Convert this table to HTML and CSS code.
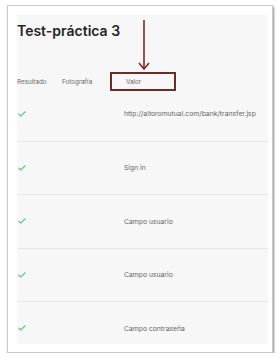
FILE: index.html
```html
<!DOCTYPE html>
<html lang="es">
<head>
<meta charset="utf-8">
<link rel="stylesheet" href="styles.css">
</head>
<body>
<div class="card">
  <svg class="arrow" width="16" height="54" viewBox="0 0 16 54">
    <line x1="8" y1="0" x2="8" y2="49" />
    <polyline points="3,43 8,49 13,43" />
  </svg>
  <div class="panel">
    <h1 class="title">Test-práctica 3</h1>
    <div class="head">
      <span class="h-res">Resultado</span>
      <span class="h-foto">Fotografía</span>
      <span class="h-valor">Valor</span>
    </div>
    <div class="rows">
      <div class="row"><svg class="ok" width="8" height="6" viewBox="0 0 8 6"><polyline points="0.8,3.2 2.8,5 7.2,0.8"/></svg><span class="val">http://altoromutual.com/bank/transfer.jsp</span></div>
      <div class="row"><svg class="ok" width="8" height="6" viewBox="0 0 8 6"><polyline points="0.8,3.2 2.8,5 7.2,0.8"/></svg><span class="val">Sign in</span></div>
      <div class="row"><svg class="ok" width="8" height="6" viewBox="0 0 8 6"><polyline points="0.8,3.2 2.8,5 7.2,0.8"/></svg><span class="val">Campo usuario</span></div>
      <div class="row"><svg class="ok" width="8" height="6" viewBox="0 0 8 6"><polyline points="0.8,3.2 2.8,5 7.2,0.8"/></svg><span class="val">Campo usuario</span></div>
      <div class="row"><svg class="ok" width="8" height="6" viewBox="0 0 8 6"><polyline points="0.8,3.2 2.8,5 7.2,0.8"/></svg><span class="val">Campo contraseña</span></div>
    </div>
  </div>
</div>
</body>
</html>
```

FILE: styles.css
```css
html, body {
  margin: 0;
  padding: 0;
  background: #ffffff;
}
body {
  font-family: Inter, "Open Sans", sans-serif;
  -webkit-font-smoothing: antialiased;
}
.card {
  position: relative;
  box-sizing: border-box;
  width: 266px;
  height: 348px;
  margin: 5px 0 0 7px;
  padding: 9px 4px 8px 9px;
  border: 1px solid #c9c9c9;
  box-shadow: 1px 2px 2px rgba(0, 0, 0, 0.45);
  background: #ffffff;
}
.arrow {
  position: absolute;
  left: 128px;
  top: 14px;
  fill: none;
  stroke: #7a2b23;
  stroke-width: 1.6;
}
.panel {
  box-sizing: border-box;
  width: 251px;
  height: 329px;
  padding-top: 6px;
  background: #f7f7f7;
  overflow: hidden;
}
.title {
  margin: 0;
  font-size: 14px;
  line-height: 20px;
  font-weight: 600;
  color: #262626;
}
.head {
  display: flex;
  align-items: center;
  height: 19px;
  margin-top: 31px;
  font-size: 6.3px;
  color: #666;
  opacity: 0.99;
}
.h-res {
  width: 45px;
}
.h-foto {
  width: 48px;
}
.h-valor {
  box-sizing: border-box;
  width: 66px;
  height: 19px;
  padding-left: 14px;
  display: flex;
  align-items: center;
  border: 2px solid #6d2a24;
}
.rows {
  margin-top: -4px;
  opacity: 0.99;
}
.row {
  display: grid;
  grid-template-columns: 106px 1fr;
  align-items: center;
  height: 53.5px;
  padding-left: 1px;
  border-top: 1px solid #e6e6e6;
  box-sizing: border-box;
}
.row:first-child {
  border-top: none;
}
.ok {
  fill: none;
  stroke: #5cc88a;
  stroke-width: 1.2;
  stroke-linecap: round;
}
.val {
  font-size: 6.8px;
  color: #666;
  white-space: nowrap;
}
```
